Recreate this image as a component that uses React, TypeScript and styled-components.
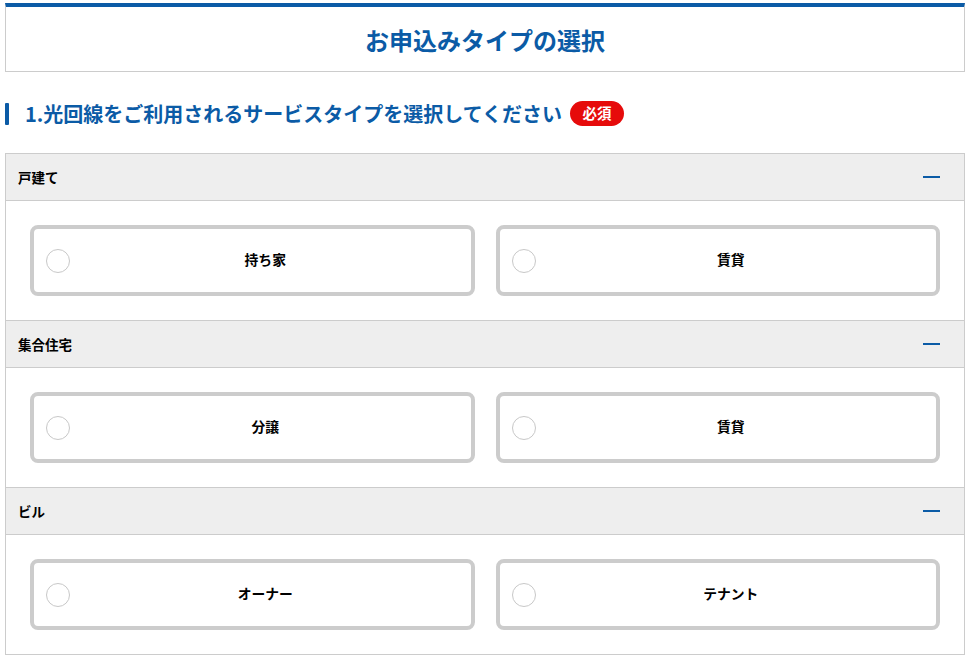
import React from "react";
import styled, { createGlobalStyle } from "styled-components";

const Global = createGlobalStyle`
  html, body { margin: 0; padding: 0; background: #fff; }
  body { font-family: "Noto Sans CJK JP", "Noto Sans", sans-serif; color: #000; }
  * { box-sizing: border-box; }
`;

const BLUE = "#0b5ba6";

const Page = styled.div`
  padding: 3px 5px 0;
  width: 970px;
`;

const TitleBox = styled.div`
  border: 1px solid #cccccc;
  border-top: 4px solid ${BLUE};
  height: 69px;
  display: flex;
  align-items: center;
  justify-content: center;
`;

const Title = styled.h1`
  margin: 0;
  font-size: 24px;
  font-weight: 700;
  color: ${BLUE};
  line-height: 1;
  padding-top: 1px;
`;

const SectionHeading = styled.div`
  display: flex;
  align-items: center;
  height: 25px;
  margin: 29px 0 27px;
`;

const HeadingBar = styled.span`
  width: 4px;
  height: 22px;
  background: ${BLUE};
  border-radius: 1px;
  flex: none;
`;

const HeadingText = styled.h2`
  margin: 0 0 0 16px;
  font-size: 20px;
  font-weight: 700;
  color: ${BLUE};
  line-height: 1;
  white-space: nowrap;
`;

const Badge = styled.span`
  margin-left: 8px;
  height: 25px;
  width: 54px;
  border-radius: 13px;
  background: #e60b0b;
  color: #fff;
  font-size: 14.5px;
  font-weight: 700;
  display: flex;
  align-items: center;
  justify-content: center;
  line-height: 1;
`;

const Accordion = styled.div`
  border: 1px solid #cccccc;
`;

const GroupHeader = styled.div<{ $first?: boolean }>`
  height: ${(p) => (p.$first ? "47px" : "48px")};
  background: #eeeeee;
  border-top: ${(p) => (p.$first ? "none" : "1px solid #cccccc")};
  border-bottom: 1px solid #cccccc;
  display: flex;
  align-items: center;
  justify-content: space-between;
  padding: 0 24px 0 12px;
`;

const GroupTitle = styled.span`
  font-size: 13.5px;
  font-weight: 700;
  color: #000;
`;

const Minus = styled.span`
  width: 17px;
  height: 2px;
  background: ${BLUE};
  display: block;
`;

const GroupBody = styled.div`
  padding: 24px;
  display: grid;
  grid-template-columns: 1fr 1fr;
  column-gap: 21px;
  height: 119px;
`;

const Card = styled.label`
  height: 71px;
  border: 4px solid #cccccc;
  border-radius: 8px;
  background: #fff;
  display: flex;
  align-items: center;
  padding-left: 12px;
  cursor: pointer;
`;

const Radio = styled.span`
  width: 24px;
  height: 24px;
  border: 1px solid #c8c8c8;
  border-radius: 50%;
  background: #fff;
  flex: none;
`;

const CardLabel = styled.span`
  flex: 1;
  text-align: center;
  font-size: 13.8px;
  font-weight: 700;
  color: #000;
  padding: 0 10px 3px 0;
`;

const groups = [
  { title: "戸建て", options: ["持ち家", "賃貸"] },
  { title: "集合住宅", options: ["分譲", "賃貸"] },
  { title: "ビル", options: ["オーナー", "テナント"] },
];

export default function App() {
  return (
    <>
      <Global />
      <Page>
        <TitleBox>
          <Title>お申込みタイプの選択</Title>
        </TitleBox>
        <SectionHeading>
          <HeadingBar />
          <HeadingText>1.光回線をご利用されるサービスタイプを選択してください</HeadingText>
          <Badge>必須</Badge>
        </SectionHeading>
        <Accordion>
          {groups.map((g, i) => (
            <React.Fragment key={g.title}>
              <GroupHeader $first={i === 0}>
                <GroupTitle>{g.title}</GroupTitle>
                <Minus />
              </GroupHeader>
              <GroupBody>
                {g.options.map((o) => (
                  <Card key={o}>
                    <Radio />
                    <CardLabel>{o}</CardLabel>
                  </Card>
                ))}
              </GroupBody>
            </React.Fragment>
          ))}
        </Accordion>
      </Page>
    </>
  );
}
